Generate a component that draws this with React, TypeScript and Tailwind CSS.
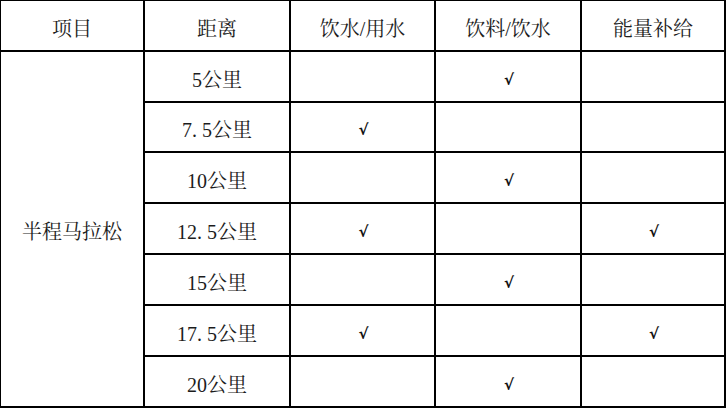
import React from "react";

const FONT = '"Liberation Serif","Noto Serif CJK SC","Noto Sans CJK SC",serif';

const rows: [string, string, string, string][] = [
  ["5公里", "", "√", ""],
  ["7.5公里", "√", "", ""],
  ["10公里", "", "√", ""],
  ["12.5公里", "√", "", "√"],
  ["15公里", "", "√", ""],
  ["17.5公里", "√", "", "√"],
  ["20公里", "", "√", ""],
];

function Dist({ text }: { text: string }) {
  const i = text.indexOf(".");
  if (i < 0) return <span>{text}</span>;
  return (
    <span>
      {text.slice(0, i)}
      <span className="inline-block w-[10px] text-left">.</span>
      {text.slice(i + 1)}
    </span>
  );
}

function Cell({ children, className = "" }: { children?: React.ReactNode; className?: string }) {
  return (
    <div
      className={
        "flex items-center justify-center border-r-2 border-b-2 border-black leading-none " +
        className
      }
    >
      {children}
    </div>
  );
}

function CheckCell({ on }: { on: string }) {
  return (
    <Cell className="pt-[7px] pl-[2px]">
      {on && (
        <span
          className="text-[15px] font-bold text-[#111]"
          style={{ fontFamily: '"DejaVu Sans",sans-serif' }}
        >
          √
        </span>
      )}
    </Cell>
  );
}

export default function App() {
  return (
    <div className="w-[726px] h-[409px] bg-white overflow-hidden">
      <div
        className="grid grid-cols-[144px_146px_145px_146px_144px] grid-rows-[51px_51px_50px_51px_51px_51px_51px_51px] border-l border-t border-black text-[20px] text-[#1c1c1c]"
        style={{ fontFamily: FONT }}
      >
        <Cell className="pt-[6px]">项目</Cell>
        <Cell className="pt-[6px]">距离</Cell>
        <Cell className="pt-[6px]">饮水/用水</Cell>
        <Cell className="pt-[6px]">饮料/饮水</Cell>
        <Cell className="pt-[6px]">能量补给</Cell>
        <Cell className="col-start-1 row-start-2 row-span-7 pt-[6px]">半程马拉松</Cell>
        {rows.map((r, idx) => (
          <React.Fragment key={idx}>
            <Cell className="pt-[6px]">
              <Dist text={r[0]} />
            </Cell>
            <CheckCell on={r[1]} />
            <CheckCell on={r[2]} />
            <CheckCell on={r[3]} />
          </React.Fragment>
        ))}
      </div>
    </div>
  );
}
